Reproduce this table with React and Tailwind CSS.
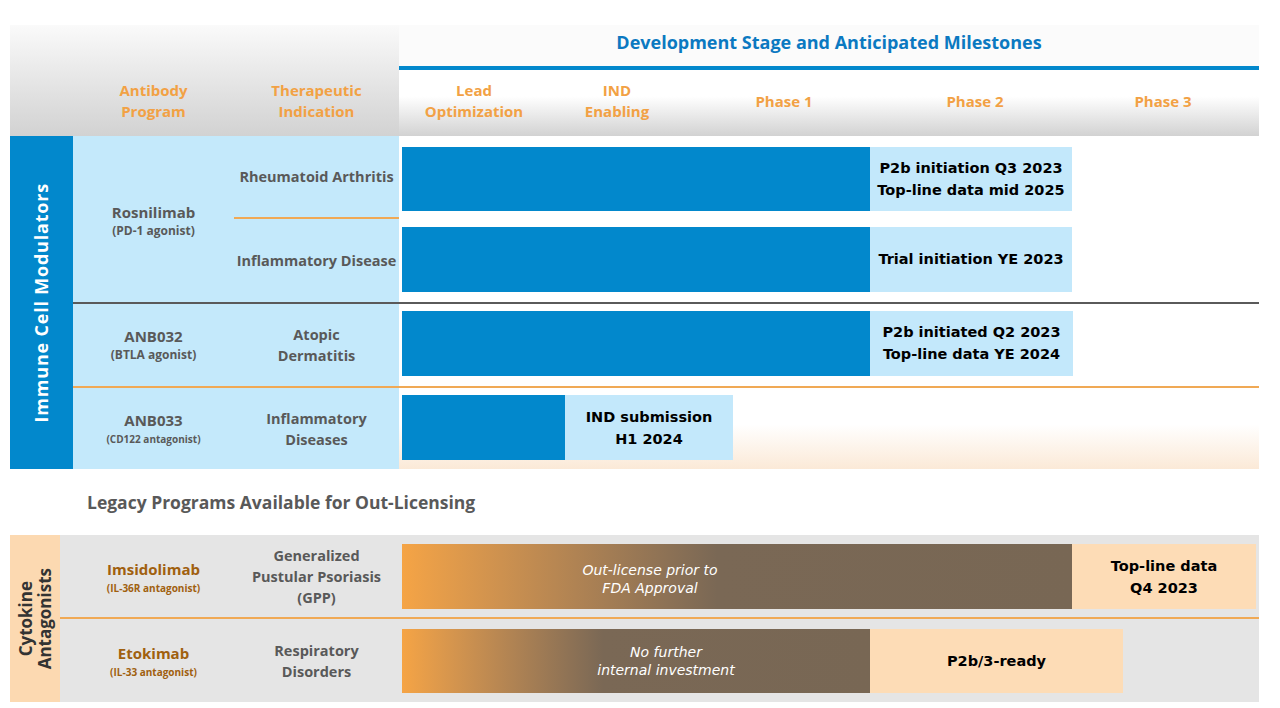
import React from 'react';

const label = "font-['Open_Sans',sans-serif] font-bold text-[#595959]";
const mile = "font-['DejaVu_Sans',sans-serif] font-bold text-[14.5px] leading-[22px] text-black text-center";

function Blue({ w }) {
  return <div className="h-full bg-[#0288cc]" style={{ width: w }} />;
}

function MileBlue({ w, children, tight }) {
  return (
    <div className={`h-full bg-[#c3e8fb] flex flex-col items-center justify-center ${mile} ${tight ? 'leading-[17px]' : ''}`} style={{ width: w }}>
      {children}
    </div>
  );
}

function Indication({ children }) {
  return (
    <div className={`w-[165px] shrink-0 flex flex-col items-center justify-center text-center text-[14.5px] leading-[21px] ${label}`}>
      {children}
    </div>
  );
}

function Program({ name, sub, brown, small, pad = '' }) {
  return (
    <div className={`w-[161px] shrink-0 flex flex-col items-center justify-center text-center ${pad}`}>
      <div className={`font-['Open_Sans',sans-serif] font-bold text-[15px] leading-[20px] ${brown ? 'text-[#a0600f]' : 'text-[#595959]'}`}>{name}</div>
      <div className={`font-['Open_Sans',sans-serif] font-bold ${small ? 'text-[10px]' : 'text-[12px]'} leading-[18px] ${brown ? 'text-[#a0600f]' : 'text-[#595959]'}`}>{sub}</div>
    </div>
  );
}

export default function App() {
  const phases = [
    { t: ['Lead', 'Optimization'], w: 'w-[150px]' },
    { t: ['IND', 'Enabling'], w: 'w-[136px]' },
    { t: ['Phase 1'], w: 'w-[198px]' },
    { t: ['Phase 2'], w: 'w-[184px]' },
    { t: ['Phase 3'], w: 'w-[192px]' },
  ];

  return (
    <div className="w-[1280px] h-[708px] bg-white overflow-hidden pt-[25px] pl-[10px]">
      {/* header */}
      <div className="flex w-[1249px] h-[111px]">
        <div className="w-[389px] h-full flex items-end bg-linear-to-b from-[#fafafa] to-[#d2d2d2] pb-[14px]">
          <div className="w-[63px]" />
          <div className="w-[161px] text-center text-[15px] leading-[21px] font-['Open_Sans',sans-serif] font-bold text-[#f2a144]">
            Antibody<br />Program
          </div>
          <div className="w-[165px] text-center text-[15px] leading-[21px] font-['Open_Sans',sans-serif] font-bold text-[#f2a144]">
            Therapeutic<br />Indication
          </div>
        </div>
        <div className="w-[860px] h-full flex flex-col">
          <div className="h-[41px] flex items-center justify-center bg-[#fbfbfb] text-[18px] font-['Open_Sans',sans-serif] font-bold text-[#0b79c1] pb-[6px]">
            Development Stage and Anticipated Milestones
          </div>
          <div className="h-[4px] bg-[#0288cc]" />
          <div className="flex-1 flex bg-linear-to-b from-white from-40% to-[#d2d2d2]">
            {phases.map((p) => (
              <div key={p.t.join()} className={`${p.w} flex flex-col items-center justify-center pb-[4px] text-center text-[15px] leading-[21px] font-['Open_Sans',sans-serif] font-bold text-[#f2a144]`}>
                {p.t.map((l) => <div key={l}>{l}</div>)}
              </div>
            ))}
          </div>
        </div>
      </div>

      {/* immune cell modulators */}
      <div className="flex w-[1249px] h-[333px]">
        <div className="w-[63px] shrink-0 bg-[#0288cc] flex items-center justify-center">
          <div className="[writing-mode:vertical-rl] rotate-180 text-white text-[18px] font-['Open_Sans',sans-serif] font-bold tracking-[0.8px]">
            Immune Cell Modulators
          </div>
        </div>
        <div className="flex flex-col w-[1186px]">
          {/* rosnilimab */}
          <div className="flex h-[166px]">
            <div className="bg-[#c4e9fb] flex pt-[4px]">
              <Program name="Rosnilimab" sub="(PD-1 agonist)" />
            </div>
            <div className="flex flex-col">
              <div className="flex h-[83px]">
                <div className="bg-[#c4e9fb] flex border-b-2 border-[#f0a955]">
                  <Indication>Rheumatoid Arthritis</Indication>
                </div>
                <div className="w-[860px] flex items-center pl-[3px] pt-[3px]">
                  <div className="flex h-[64px]">
                    <Blue w={468} />
                    <MileBlue w={202}>
                      <div>P2b initiation Q3 2023</div>
                      <div>Top-line data mid 2025</div>
                    </MileBlue>
                  </div>
                </div>
              </div>
              <div className="flex h-[83px]">
                <div className="bg-[#c4e9fb] flex">
                  <Indication>Inflammatory Disease</Indication>
                </div>
                <div className="w-[860px] flex items-center pl-[3px] pb-[3px]">
                  <div className="flex h-[65px]">
                    <Blue w={468} />
                    <MileBlue w={202}>
                      <div>Trial initiation YE 2023</div>
                    </MileBlue>
                  </div>
                </div>
              </div>
            </div>
          </div>
          <div className="h-[2px] bg-[#5a5a5a]" />
          {/* ANB032 */}
          <div className="flex h-[82px]">
            <div className="bg-[#c4e9fb] flex">
              <Program name="ANB032" sub="(BTLA agonist)" />
              <Indication>
                <div>Atopic</div>
                <div>Dermatitis</div>
              </Indication>
            </div>
            <div className="w-[860px] flex items-center pl-[3px] pb-[4px]">
              <div className="flex h-[65px]">
                <Blue w={468} />
                <MileBlue w={203}>
                  <div>P2b initiated Q2 2023</div>
                  <div>Top-line data YE 2024</div>
                </MileBlue>
              </div>
            </div>
          </div>
          <div className="h-[2px] bg-[#f0a955]" />
          {/* ANB033 */}
          <div className="flex h-[81px]">
            <div className="bg-[#c4e9fb] flex">
              <Program name="ANB033" sub="(CD122 antagonist)" small />
              <Indication>
                <div>Inflammatory</div>
                <div>Diseases</div>
              </Indication>
            </div>
            <div className="w-[860px] flex items-center pl-[3px] pb-[2px] bg-linear-to-b from-white from-45% to-[#fbe9d7]">
              <div className="flex h-[65px]">
                <Blue w={163} />
                <MileBlue w={168} tight>
                  <div>IND submission</div>
                  <div>H1 2024</div>
                </MileBlue>
              </div>
            </div>
          </div>
        </div>
      </div>

      {/* legacy */}
      <div className="h-[66px] flex items-center pl-[77px] text-[17.5px] font-['Open_Sans',sans-serif] font-bold text-[#595959]">
        Legacy Programs Available for Out-Licensing
      </div>

      <div className="flex w-[1249px] h-[167px]">
        <div className="w-[50px] shrink-0 bg-[#fcd9b1] flex items-center justify-center">
          <div className="[writing-mode:vertical-rl] rotate-180 text-[#333] text-[17px] leading-[19px] font-['Open_Sans',sans-serif] font-bold text-center">
            Cytokine<br />Antagonists
          </div>
        </div>
        <div className="flex flex-col w-[1199px] bg-[#e5e5e5]">
          <div className="flex h-[82px] pl-[13px]">
            <Program name="Imsidolimab" sub="(IL-36R antagonist)" brown small pad="pt-[4px]" />
            <Indication>
              <div>Generalized</div>
              <div>Pustular Psoriasis</div>
              <div>(GPP)</div>
            </Indication>
            <div className="w-[860px] flex items-center pl-[3px] pt-[1px]">
              <div className="flex h-[65px]">
                <div className="w-[670px] h-full bg-linear-to-r from-[#f5a445] via-[#7a6855] via-47% to-[#786754] flex items-center">
                  <div className="ml-[148px] w-[200px] pt-[4px] text-center text-white italic font-['DejaVu_Sans',sans-serif] text-[14px] leading-[18px]">
                    Out-license prior to<br />FDA Approval
                  </div>
                </div>
                <div className={`w-[184px] h-full bg-[#fddcb6] flex flex-col items-center justify-center ${mile} leading-[17px]`}>
                  <div>Top-line data</div>
                  <div>Q4 2023</div>
                </div>
              </div>
            </div>
          </div>
          <div className="h-[2px] bg-[#f0a955]" />
          <div className="flex h-[83px] pl-[13px]">
            <Program name="Etokimab" sub="(IL-33 antagonist)" brown small pad="pt-[2px]" />
            <Indication>
              <div>Respiratory</div>
              <div>Disorders</div>
            </Indication>
            <div className="w-[860px] flex items-center pl-[3px]">
              <div className="flex h-[64px]">
                <div className="w-[468px] h-full bg-linear-to-r from-[#f5a445] via-[#7a6855] via-43% to-[#786754] flex items-center">
                  <div className="ml-[164px] w-[200px] text-center text-white italic font-['DejaVu_Sans',sans-serif] text-[14px] leading-[18px]">
                    No further<br />internal investment
                  </div>
                </div>
                <div className={`w-[253px] h-full bg-[#fddcb6] flex items-center justify-center ${mile}`}>
                  P2b/3-ready
                </div>
              </div>
            </div>
          </div>
        </div>
      </div>
    </div>
  );
}
